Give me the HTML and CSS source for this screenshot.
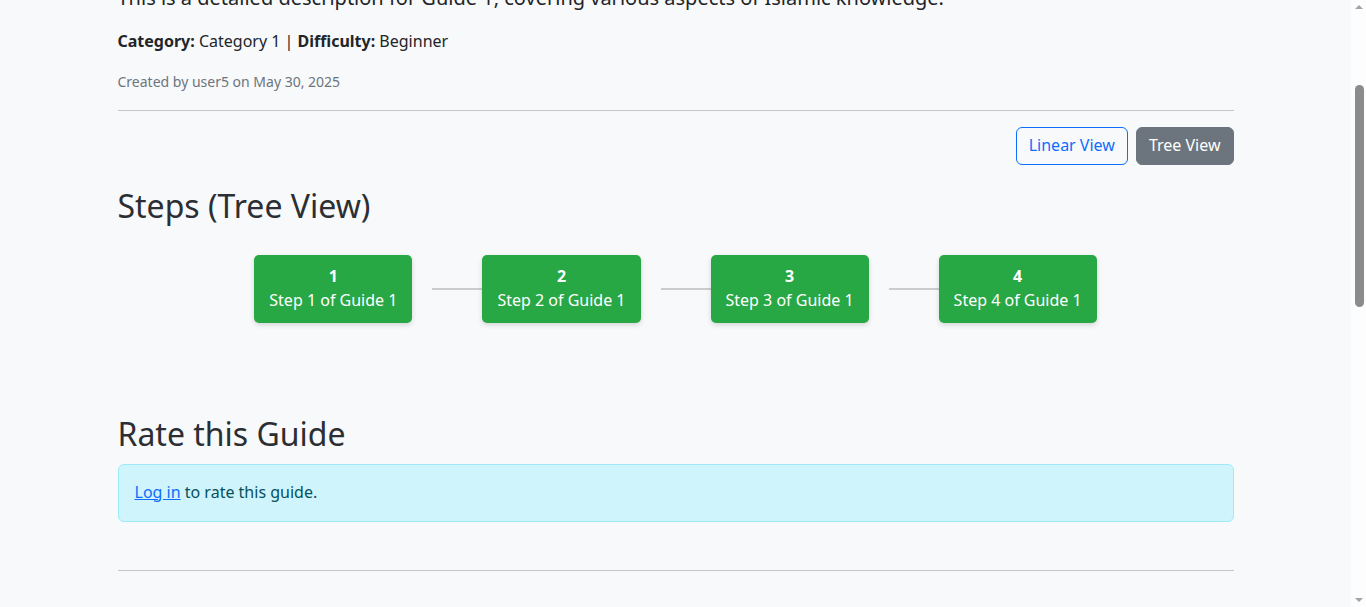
FILE: index.html
```html
<!DOCTYPE html>
<html lang="en">
<head>
<meta charset="utf-8">
<title>Guide 1 - Islamic Guides</title>
<link rel="stylesheet" href="styles.css">
</head>
<body>
<nav class="navbar">
  <div class="container nav-inner">
    <a class="brand" href="#">Islamic Guides</a>
    <ul class="nav-links">
      <li><a href="#">Home</a></li>
      <li><a href="#">Guides</a></li>
      <li><a href="#">Categories</a></li>
    </ul>
    <div class="nav-auth">
      <a href="#">Log in</a>
      <a href="#">Register</a>
    </div>
  </div>
</nav>

<main class="container page">
  <h1 class="title">Guide 1</h1>
  <p class="lead">This is a detailed description for Guide 1, covering various aspects of Islamic knowledge.</p>
  <p class="meta"><strong>Category:</strong> Category 1 | <strong>Difficulty:</strong> Beginner</p>
  <p class="meta meta-last"><small class="muted">Created by user5 on May 30, 2025</small></p>
  <hr class="rule" id="meta-rule">

  <div class="view-toggle">
    <button class="btn btn-outline" type="button">Linear View</button>
    <button class="btn btn-secondary" type="button">Tree View</button>
  </div>

  <h2 class="section-title">Steps (Tree View)</h2>
  <div class="tree">
    <div class="node"><strong>1</strong><span>Step 1 of Guide 1</span></div>
    <div class="connector"></div>
    <div class="node"><strong>2</strong><span>Step 2 of Guide 1</span></div>
    <div class="connector"></div>
    <div class="node"><strong>3</strong><span>Step 3 of Guide 1</span></div>
    <div class="connector"></div>
    <div class="node"><strong>4</strong><span>Step 4 of Guide 1</span></div>
  </div>

  <section class="rating">
    <h2 class="section-title rating-title">Rate this Guide</h2>
    <div class="alert"><a href="#">Log in</a> to rate this guide.</div>
  </section>

  <hr class="rule">

  <section class="comments">
    <h3 class="comments-title">Comments</h3>
    <div class="comment">
      <p class="comment-head"><strong>user2</strong> <small class="muted">June 1, 2025</small></p>
      <p class="comment-body">Very helpful guide, thank you for sharing.</p>
    </div>
    <div class="comment">
      <p class="comment-head"><strong>user7</strong> <small class="muted">June 3, 2025</small></p>
      <p class="comment-body">The steps are clear and easy to follow.</p>
    </div>
    <div class="comment">
      <p class="comment-head"><strong>user3</strong> <small class="muted">June 5, 2025</small></p>
      <p class="comment-body">Looking forward to more guides like this one.</p>
    </div>
    <div class="alert"><a href="#">Log in</a> to leave a comment.</div>
  </section>
</main>

<footer class="footer">
  <div class="container">
    <p>&copy; 2025 Islamic Guides. All rights reserved.</p>
  </div>
</footer>

<div class="scrollbar" aria-hidden="true">
  <div class="sb-arrow sb-up"></div>
  <div class="sb-track"><div class="sb-thumb"></div></div>
  <div class="sb-arrow sb-down"></div>
</div>
<script src="script.js"></script>
</body>
</html>
```

FILE: styles.css
```css
* {
  box-sizing: border-box;
}

html {
  font-size: 16px;
}

body {
  margin: 0;
  padding-right: 15px;
  font-family: "Noto Sans", "DejaVu Sans", sans-serif;
  font-size: 1rem;
  line-height: 1.5;
  color: #212529;
  background: #f8f9fa;
}

a {
  color: #0d6efd;
}

.container {
  max-width: 1140px;
  margin: 0 auto;
  padding: 0 12px;
}

/* navbar (above the visible area) */
.navbar {
  background: #212529;
  height: 56px;
}

.nav-inner {
  height: 100%;
  display: flex;
  align-items: center;
  gap: 24px;
}

.brand {
  color: #fff;
  font-size: 1.25rem;
  text-decoration: none;
}

.nav-links {
  display: flex;
  gap: 16px;
  list-style: none;
  margin: 0;
  padding: 0;
  flex: 1;
}

.nav-links a,
.nav-auth a {
  color: rgba(255, 255, 255, 0.55);
  text-decoration: none;
}

.nav-auth {
  display: flex;
  gap: 16px;
}

/* page */
.page {
  padding-top: 48px;
}

.title {
  font-size: 2.5rem;
  font-weight: 400;
  line-height: 1.2;
  margin: 0 0 16px;
}

.lead {
  font-size: 1.25rem;
  font-weight: 400;
  margin: 0 0 16px;
}

.meta {
  margin: 0 0 16px;
}

.meta-last {
  margin-bottom: 17px;
}

strong {
  font-weight: 700;
}

.muted {
  color: #6c757d;
  font-size: 0.875em;
}

.rule {
  margin: 16px 0;
  border: 0;
  border-top: 1px solid #c6c7c8;
}

.view-toggle {
  display: flex;
  justify-content: flex-end;
  gap: 8px;
  margin-bottom: 22px;
}

.btn {
  font-family: inherit;
  font-size: 1rem;
  line-height: 1.5;
  padding: 5px 12px 7px;
  border-radius: 6px;
  border: 1px solid transparent;
  cursor: pointer;
}

.btn-outline {
  color: #0d6efd;
  border-color: #0d6efd;
  background: transparent;
}

.btn-secondary {
  color: #fff;
  background: #6c757d;
  border-color: #6c757d;
}

.section-title {
  font-size: 2rem;
  font-weight: 400;
  line-height: 1.2;
  color: #2b2f33;
  margin: 0 0 8px;
}

.tree {
  display: flex;
  justify-content: center;
  align-items: center;
  padding: 22px 0 23px;
}

.node {
  display: flex;
  flex-direction: column;
  align-items: center;
  padding: 9px 15px 11px;
  background: #28a745;
  color: #fff;
  border-radius: 5px;
  box-shadow: 0 2px 5px rgba(0, 0, 0, 0.15);
}

.connector {
  width: 50px;
  height: 2px;
  margin-left: 20px;
  background: #ccc;
}

.rating {
  margin-top: 69px;
  margin-bottom: 48px;
}

.rating-title {
  margin-bottom: 10px;
}

.alert {
  padding: 15px 16px 17px;
  border: 1px solid #9eeaf9;
  border-radius: 6px;
  background: #cff4fc;
  color: #055160;
  margin-bottom: 16px;
}

/* comments (below the visible area) */
.comments {
  margin-top: 48px;
  padding-bottom: 48px;
}

.comments-title {
  font-size: 1.75rem;
  font-weight: 400;
  line-height: 1.2;
  margin: 0 0 16px;
}

.comment {
  background: #fff;
  border: 1px solid #dee2e6;
  border-radius: 6px;
  padding: 16px;
  margin-bottom: 16px;
}

.comment-head,
.comment-body {
  margin: 0;
}

.footer {
  background: #e9ecef;
  padding: 24px 0;
  color: #6c757d;
  text-align: center;
}

.footer p {
  margin: 0;
}

/* browser scrollbar drawn over the right edge */
.scrollbar {
  position: fixed;
  top: 0;
  right: 0;
  bottom: 0;
  width: 15px;
  background: #fdfdfd;
  display: flex;
  flex-direction: column;
  align-items: center;
}

.sb-arrow {
  width: 0;
  height: 0;
  margin: 5px 0;
  border-left: 4px solid transparent;
  border-right: 4px solid transparent;
}

.sb-up {
  border-bottom: 4px solid #a3a3a3;
}

.sb-down {
  border-top: 4px solid #a3a3a3;
}

.sb-track {
  flex: 1;
  width: 100%;
  padding-top: 71px;
  display: flex;
  justify-content: center;
}

.sb-thumb {
  width: 9px;
  height: 222px;
  margin-left: 2px;
  border-radius: 5px;
  background: #8b8b8b;
}
```

FILE: script.js
```js
(function () {
  if ('scrollRestoration' in history) {
    history.scrollRestoration = 'manual';
  }
  function align() {
    var rule = document.getElementById('meta-rule');
    var y = rule.getBoundingClientRect().top + window.scrollY - 110;
    window.scrollTo(0, y);
  }
  align();
  window.addEventListener('load', align);
})();
```
